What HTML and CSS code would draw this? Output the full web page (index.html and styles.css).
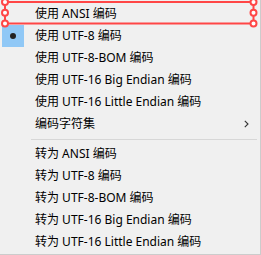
FILE: index.html
```html
<!DOCTYPE html>
<html>
<head>
<meta charset="utf-8">
<link rel="stylesheet" href="styles.css">
</head>
<body>
<div class="menu">
  <div class="item"><span class="check"></span><span class="label">使用 ANSI 编码</span></div>
  <div class="item checked"><span class="check"><span class="dot"></span></span><span class="label">使用 UTF-8 编码</span></div>
  <div class="item"><span class="check"></span><span class="label">使用 UTF-8-BOM 编码</span></div>
  <div class="item"><span class="check"></span><span class="label">使用 UTF-16 Big Endian 编码</span></div>
  <div class="item"><span class="check"></span><span class="label">使用 UTF-16 Little Endian 编码</span></div>
  <div class="item"><span class="check"></span><span class="label">编码字符集</span>
    <svg class="arrow" width="5" height="8" viewBox="0 0 5 8"><path d="M0.8 0.8 L4 4 L0.8 7.2" fill="none" stroke="#333" stroke-width="1.1"/></svg>
  </div>
  <div class="sep"></div>
  <div class="item"><span class="check"></span><span class="label">转为 ANSI 编码</span></div>
  <div class="item"><span class="check"></span><span class="label">转为 UTF-8 编码</span></div>
  <div class="item"><span class="check"></span><span class="label">转为 UTF-8-BOM 编码</span></div>
  <div class="item"><span class="check"></span><span class="label">转为 UTF-16 Big Endian 编码</span></div>
  <div class="item"><span class="check"></span><span class="label">转为 UTF-16 Little Endian 编码</span></div>

  <svg class="annot" width="261" height="255" viewBox="0 0 261 255">
    <rect x="5" y="2" width="248.5" height="21.5" fill="none" stroke="#ff4646" stroke-width="2"/>
    <g fill="#fff" stroke="#ff4646" stroke-width="2">
      <circle cx="5" cy="2" r="3"/>
      <circle cx="5" cy="12.8" r="3"/>
      <circle cx="5" cy="23.5" r="3"/>
      <circle cx="253.5" cy="2" r="3"/>
      <circle cx="253.5" cy="12.8" r="3"/>
      <circle cx="253.5" cy="23.5" r="3"/>
    </g>
  </svg>
</div>
</body>
</html>
```

FILE: styles.css
```css
html, body {
  margin: 0;
  padding: 0;
  background: #f0f0f0;
}

.menu {
  position: relative;
  width: 261px;
  height: 255px;
  box-sizing: border-box;
  background: #f0f0f0;
  border-right: 1px solid #cccccc;
  border-bottom: 1px solid #cccccc;
  padding-top: 3px;
  font-family: "Noto Sans", "Noto Sans CJK SC", sans-serif;
  font-size: 12px;
  color: #000;
  overflow: hidden;
}

.item {
  display: flex;
  align-items: center;
  height: 22px;
}

.check {
  width: 22px;
  height: 22px;
  margin-left: 2px;
  flex: none;
  display: flex;
  align-items: center;
  justify-content: center;
}

.checked .check {
  background: #90c8f6;
}

.dot {
  width: 6px;
  height: 6px;
  border-radius: 50%;
  background: #222;
}

.label {
  margin-left: 11px;
  white-space: nowrap;
  line-height: 22px;
}

.arrow {
  margin-left: auto;
  margin-right: 11px;
}

.sep {
  height: 1px;
  margin: 4px 3px 3px 31px;
  background: #d7d7d7;
}

.annot {
  position: absolute;
  top: 0;
  left: 0;
  pointer-events: none;
}
```
